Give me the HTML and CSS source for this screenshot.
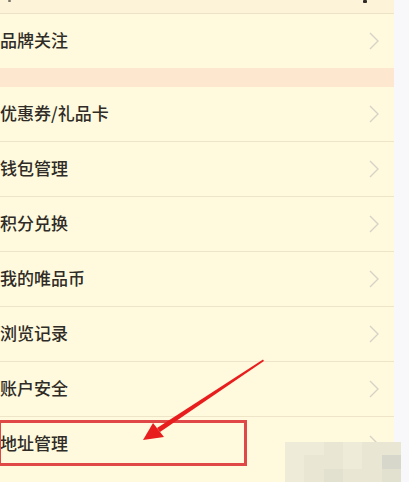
FILE: index.html
```html
<!DOCTYPE html>
<html lang="zh-CN">
<head>
<meta charset="utf-8">
<title>我的</title>
<link rel="stylesheet" href="styles.css">
</head>
<body>
<div class="page">
  <div class="menu">
    <div class="top-strip"><span class="dot"></span><span class="dot dot-r"></span></div>
    <div class="row"><span class="label">品牌关注</span><svg class="chev" viewBox="0 0 10 18"><path d="M1 1 L9 9 L1 17" /></svg></div>
    <div class="band"></div>
    <div class="row lined"><span class="label">优惠券/礼品卡</span><svg class="chev" viewBox="0 0 10 18"><path d="M1 1 L9 9 L1 17" /></svg></div>
    <div class="row lined"><span class="label">钱包管理</span><svg class="chev" viewBox="0 0 10 18"><path d="M1 1 L9 9 L1 17" /></svg></div>
    <div class="row lined"><span class="label">积分兑换</span><svg class="chev" viewBox="0 0 10 18"><path d="M1 1 L9 9 L1 17" /></svg></div>
    <div class="row lined"><span class="label">我的唯品币</span><svg class="chev" viewBox="0 0 10 18"><path d="M1 1 L9 9 L1 17" /></svg></div>
    <div class="row lined"><span class="label">浏览记录</span><svg class="chev" viewBox="0 0 10 18"><path d="M1 1 L9 9 L1 17" /></svg></div>
    <div class="row lined"><span class="label">账户安全</span><svg class="chev" viewBox="0 0 10 18"><path d="M1 1 L9 9 L1 17" /></svg></div>
    <div class="row"><span class="label">地址管理</span><svg class="chev" viewBox="0 0 10 18"><path d="M1 1 L9 9 L1 17" /></svg></div>
  </div>
  <div class="side"></div>

  <div class="highlight"></div>
  <svg class="arrow" viewBox="0 0 409 482" width="409" height="482">
    <polygon points="263,359.5 264,361 160,432 157,428" />
    <polygon points="143,440 153,423 164,437" />
  </svg>
  <div class="patch">
    <span class="b b1"></span><span class="b b1"></span><span class="b b2"></span><span class="b b1"></span><span class="b b2"></span><span class="b b2"></span>
    <span class="b b1"></span><span class="b b2"></span><span class="b b2"></span><span class="b b1"></span><span class="b b2"></span><span class="b b4"></span>
    <span class="b b1"></span><span class="b b2"></span><span class="b b3"></span><span class="b b2"></span><span class="b b2"></span><span class="b b3"></span>
  </div>
</div>
</body>
</html>
```

FILE: styles.css
```css
html, body {
  margin: 0;
  padding: 0;
  background: #f8f8fb;
}

.page {
  position: relative;
  display: flex;
  width: 409px;
  height: 482px;
  overflow: hidden;
  font-family: "Noto Sans CJK SC", "Noto Sans", sans-serif;
}

.menu {
  width: 394px;
  display: flex;
  flex-direction: column;
  background: #fffadd;
}

.side {
  flex: 1;
  background: #f8f8fb;
}

.top-strip {
  height: 13px;
  flex: none;
  background: #fcf3d9;
  border-bottom: 1px solid #ece3c6;
  display: flex;
  justify-content: space-between;
  align-items: flex-start;
  padding: 0 27px 0 8px;
}

.dot {
  width: 3px;
  height: 2px;
  background: #7a7468;
  border-radius: 1px;
}

.dot-r {
  width: 4px;
  height: 3px;
  background: #2e2a25;
}

.row {
  height: 54px;
  flex: none;
  display: flex;
  align-items: center;
  justify-content: space-between;
  padding-right: 15px;
  background: #fffadd;
}

.row.lined {
  border-bottom: 1px solid #eee5c8;
}

.label {
  font-size: 17px;
  font-weight: 500;
  color: #2f2b26;
  padding-bottom: 4px;
}

.chev {
  width: 10px;
  height: 18px;
  fill: none;
  stroke: #d6d3c6;
  stroke-width: 1.4;
}

.band {
  height: 19px;
  flex: none;
  background: #fde8cf;
}

.highlight {
  position: absolute;
  left: -2px;
  top: 420px;
  width: 243px;
  height: 40px;
  border: 3px solid #e04848;
}

.arrow {
  position: absolute;
  left: 0;
  top: 0;
  fill: #e81e1e;
}

.patch {
  position: absolute;
  left: 285px;
  top: 442px;
  width: 116px;
  height: 40px;
  display: grid;
  grid-template-columns: repeat(6, 1fr);
  grid-template-rows: repeat(3, 1fr);
}

.b { display: block; }
.b1 { background: #eeecd9; }
.b2 { background: #e9e7d4; }
.b3 { background: #e2e0cf; }
.b4 { background: #d8d7cc; }
```
